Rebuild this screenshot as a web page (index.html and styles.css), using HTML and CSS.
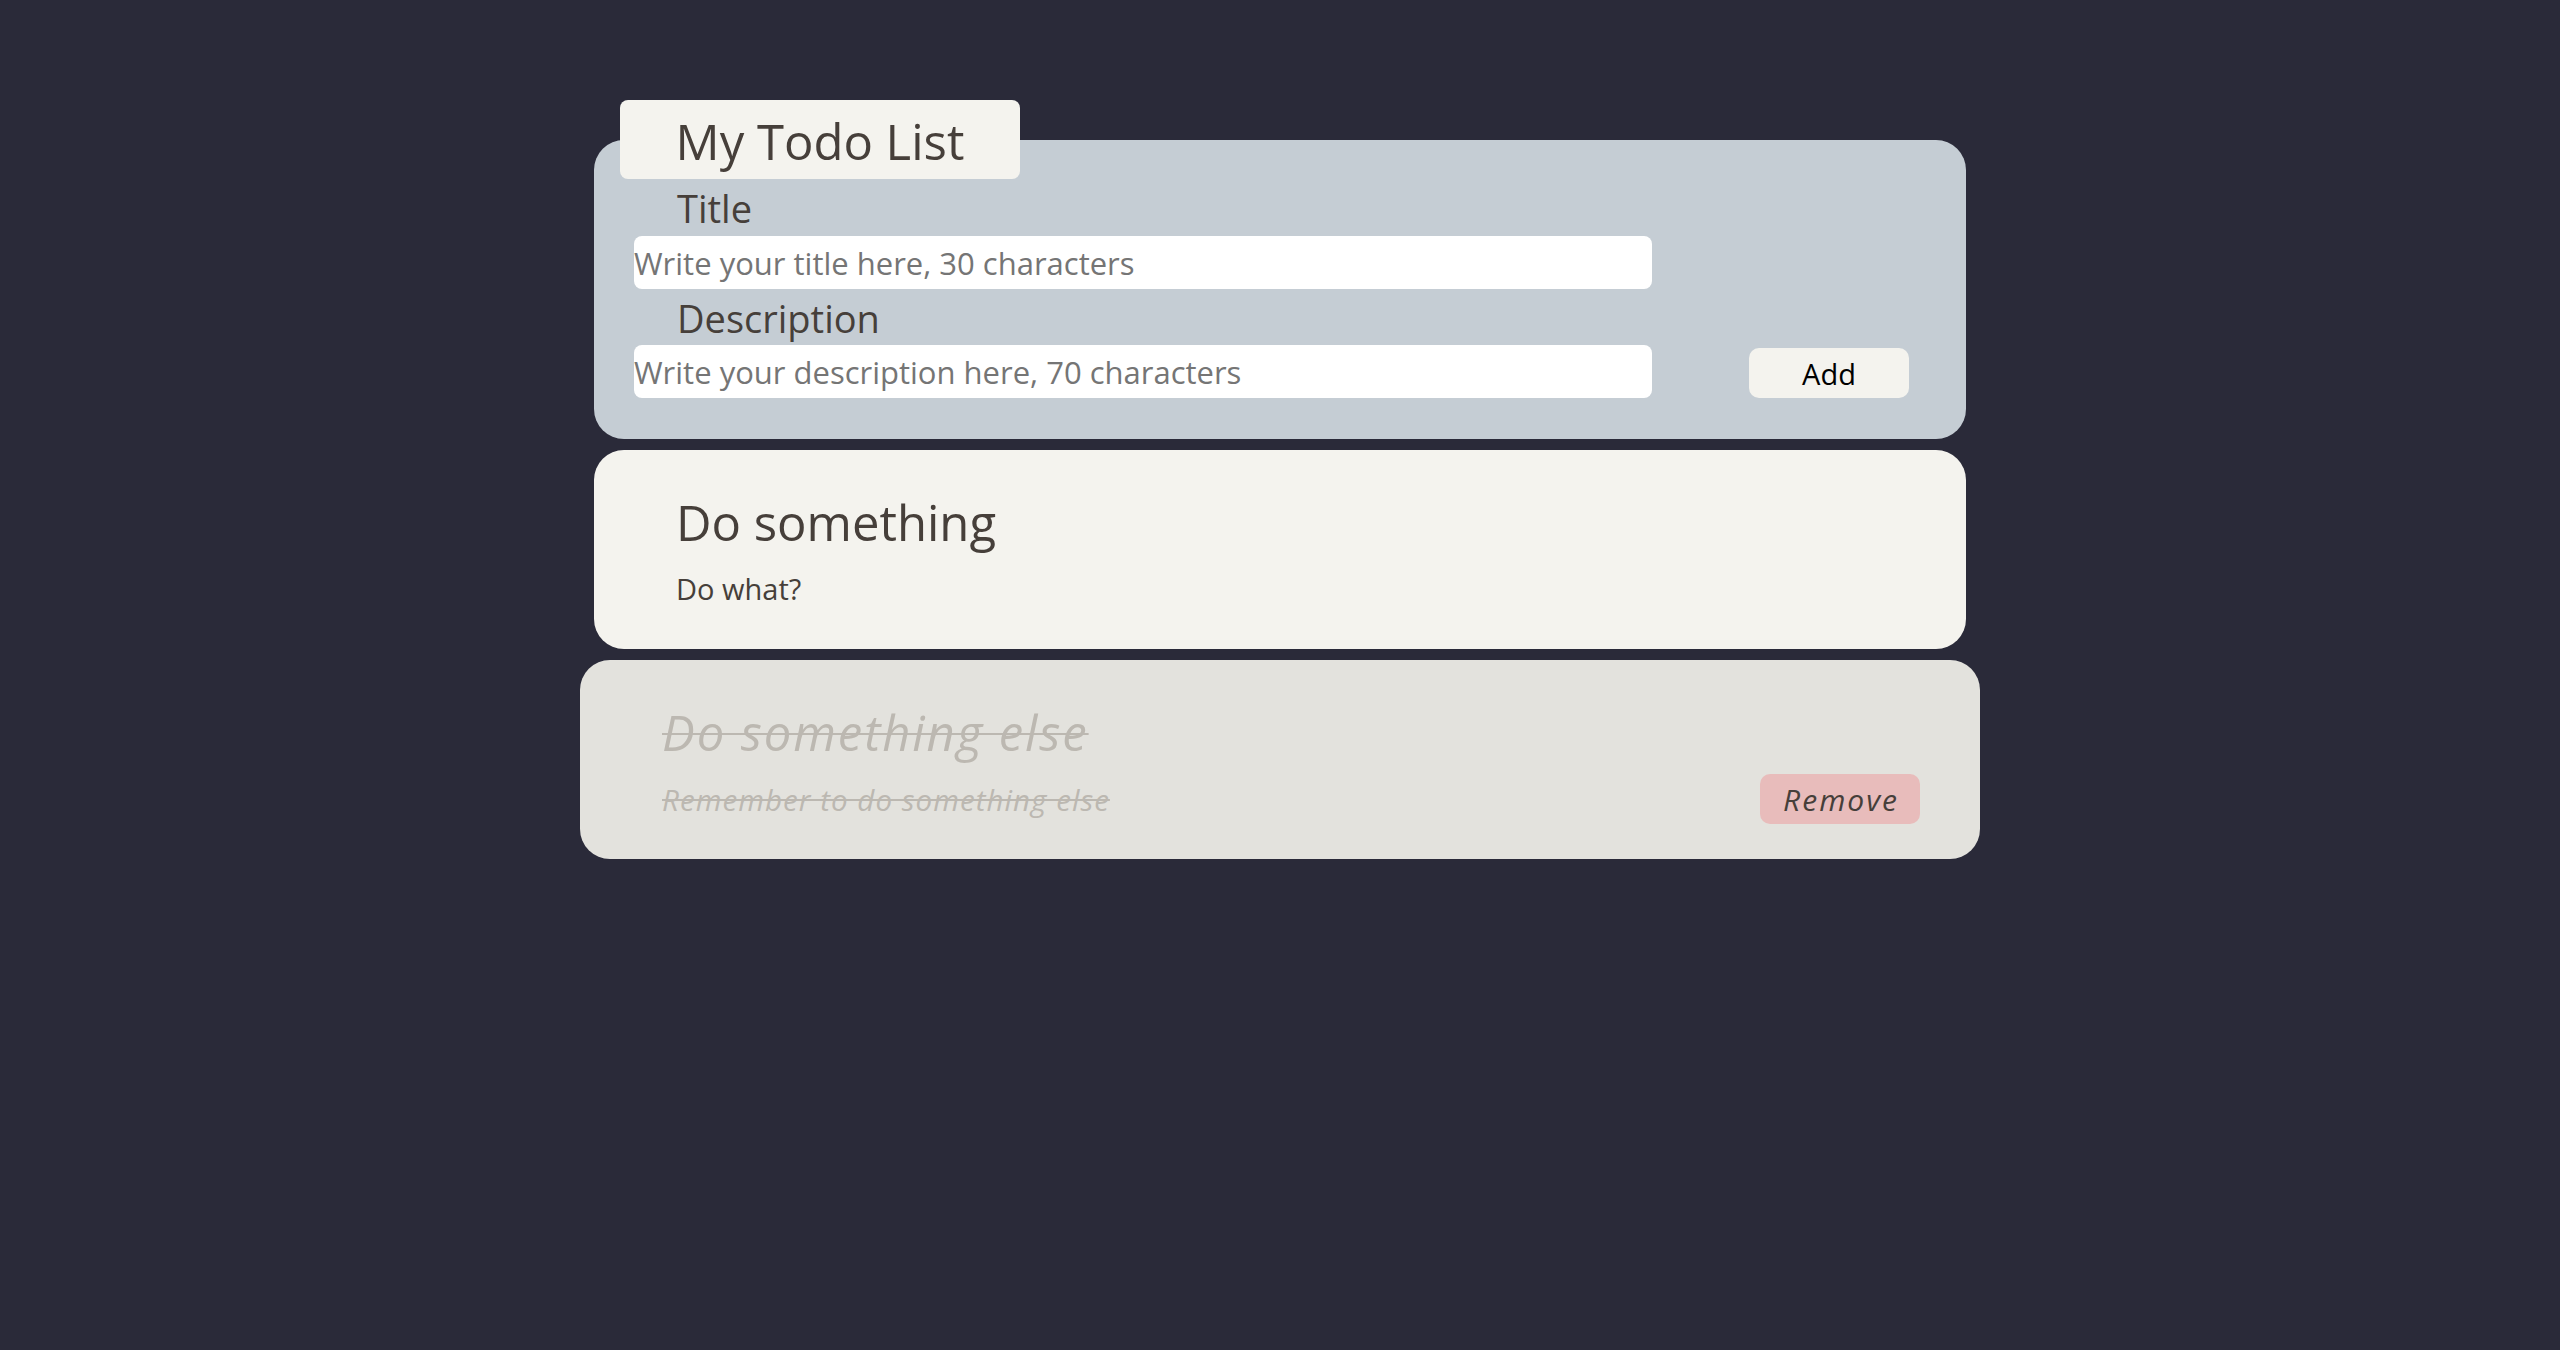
FILE: index.html
```html
<!DOCTYPE html>
<html lang="en">
<head>
<meta charset="utf-8">
<title>My Todo List</title>
<link rel="stylesheet" href="styles.css">
</head>
<body>
<main class="app">
  <div class="tab"><h1 class="tab-title">My Todo List</h1></div>
  <form class="form-card">
    <div class="fields">
      <label class="field-label" for="title">Title</label>
      <input class="field-input" id="title" type="text" placeholder="Write your title here, 30 characters">
      <label class="field-label field-label-second" for="desc">Description</label>
      <input class="field-input field-input-second" id="desc" type="text" placeholder="Write your description here, 70 characters">
    </div>
    <button class="add-btn" type="button">Add</button>
  </form>
  <section class="todo">
    <h2 class="todo-title">Do something</h2>
    <div class="todo-row">
      <p class="todo-desc">Do what?</p>
    </div>
  </section>
  <section class="todo todo-done">
    <h2 class="todo-title">Do something else</h2>
    <div class="todo-row">
      <p class="todo-desc">Remember to do something else</p>
      <button class="remove-btn" type="button"><span class="remove-label">Remove</span></button>
    </div>
  </section>
</main>
</body>
</html>
```
FILE: styles.css
```css
html, body {
  margin: 0;
  padding: 0;
}
body {
  background: #2a2a39;
  min-height: 100vh;
  font-family: "Open Sans", "Noto Sans", sans-serif;
  color: #463f3a;
}
.app {
  width: 1372px;
  margin: 0 auto;
  padding-top: 100px;
  display: flex;
  flex-direction: column;
  gap: 11px;
}
.tab {
  width: 400px;
  height: 79px;
  box-sizing: border-box;
  margin: 0 0 -50px 26px;
  padding-top: 3px;
  background: #f4f3ee;
  border-radius: 8px;
  position: relative;
  z-index: 1;
  text-align: center;
}
.tab-title {
  margin: 0;
  font-size: 49px;
  font-weight: 400;
  line-height: 76px;
  color: #463f3a;
}
.form-card {
  margin: 0;
  background: #c5cdd4;
  border-radius: 30px;
  padding: 40px 57px 41px 40px;
  display: flex;
  justify-content: space-between;
  align-items: flex-end;
}
.fields {
  width: 1018px;
  display: flex;
  flex-direction: column;
}
.field-label {
  display: block;
  margin: 6px 0 0 43px;
  font-size: 38px;
  line-height: 44px;
  color: #463f3a;
}
.field-label-second {
  margin-top: 7px;
}
.field-input {
  display: block;
  box-sizing: border-box;
  width: 1018px;
  height: 53px;
  margin-top: 6px;
  padding: 0;
  border: none;
  border-radius: 8px;
  background: #ffffff;
  font-family: "Open Sans", "Noto Sans", sans-serif;
  font-size: 31px;
  color: #463f3a;
  outline: none;
}
.field-input-second {
  margin-top: 5px;
}
.field-input::placeholder {
  color: #757575;
  opacity: 1;
}
.add-btn {
  width: 160px;
  height: 50px;
  border: none;
  border-radius: 10px;
  background: #f4f3ee;
  font-family: "Open Sans", "Noto Sans", sans-serif;
  font-size: 29px;
  color: #000000;
  padding: 0;
  cursor: pointer;
}
.todo {
  background: #f4f3ee;
  border-radius: 30px;
  padding: 42px 60px 43px 82px;
  display: flex;
  flex-direction: column;
}
.todo-title {
  margin: 0;
  font-size: 49px;
  font-weight: 400;
  line-height: 60px;
  color: #463f3a;
}
.todo-row {
  margin-top: 19px;
  display: flex;
  justify-content: space-between;
  align-items: center;
}
.todo-desc {
  margin: 0;
  font-size: 29px;
  line-height: 35px;
}
.todo-done {
  margin: 0 -14px;
  background: #e3e2dd;
  padding-bottom: 35px;
  color: #bcb8b1;
}
.todo-done .todo-title,
.todo-done .todo-desc {
  color: #bcb8b1;
  font-style: italic;
  text-decoration: line-through;
  text-decoration-thickness: 2px;
}
.todo-done .todo-title {
  letter-spacing: 1.9px;
}
.todo-done .todo-desc {
  font-size: 29.5px;
  letter-spacing: 1.05px;
  text-decoration-thickness: 1.5px;
}
.todo-done .todo-row {
  margin-top: 12px;
}
.remove-btn {
  width: 160px;
  height: 50px;
  border: none;
  border-radius: 10px;
  background: #e8bcbb;
  font-family: "Open Sans", "Noto Sans", sans-serif;
  font-size: 30px;
  font-style: italic;
  color: #463f3a;
  padding: 0;
  cursor: pointer;
}
.remove-label {
  letter-spacing: 2px;
  margin-right: -2px;
}
```
